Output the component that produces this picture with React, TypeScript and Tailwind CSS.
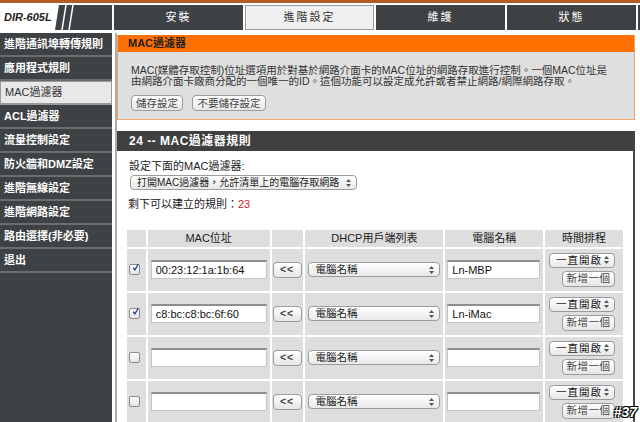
import React from 'react';

const font = 'font-["Liberation_Sans","Noto_Sans_CJK_TC",sans-serif]';

const menu = [
  '進階通訊埠轉傳規則',
  '應用程式規則',
  'MAC過濾器',
  'ACL過濾器',
  '流量控制設定',
  '防火牆和DMZ設定',
  '進階無線設定',
  '進階網路設定',
  '路由選擇(非必要)',
  '退出',
];

const tabs = ['安裝', '進階設定', '維護', '狀態'];

const rows = [
  { on: true, mac: '00:23:12:1a:1b:64', name: 'Ln-MBP' },
  { on: true, mac: 'c8:bc:c8:bc:6f:60', name: 'Ln-iMac' },
  { on: false, mac: '', name: '' },
  { on: false, mac: '', name: '' },
];

const Arrows = () => (
  <svg width="5" height="8" viewBox="0 0 5 8" className="shrink-0">
    <path d="M2.5 0 L5 3 L0 3 Z" fill="#555" />
    <path d="M0 5 L5 5 L2.5 8 Z" fill="#555" />
  </svg>
);

const Select = ({ text, className }: { text: string; className: string }) => (
  <div
    className={`flex h-[15px] items-center justify-between rounded-[4px] border border-[#9c9c9c] bg-gradient-to-b from-white to-[#e8e8e8] pl-[6px] pr-[5px] leading-none text-[#222] ${className}`}
  >
    <span className="whitespace-nowrap">{text}</span>
    <Arrows />
  </div>
);

const Btn = ({ children, className = '' }: { children: React.ReactNode; className?: string }) => (
  <div
    className={`flex h-[16px] items-center justify-center rounded-[4px] border border-[#9c9c9c] bg-gradient-to-b from-white to-[#e6e6e6] text-[10.5px] leading-none text-[#444] ${className}`}
  >
    {children}
  </div>
);

const Input = ({ value, className }: { value: string; className: string }) => (
  <div
    className={`flex h-[19px] items-center border border-[#c4c4c4] border-t-[2px] border-t-[#8e8e8e] bg-white pl-[4px] text-[11px] leading-none text-[#111] ${className}`}
  >
    {value}
  </div>
);

const Check = ({ on }: { on: boolean }) => (
  <div className="ml-[2px] flex h-[11px] w-[11px] items-center justify-center rounded-[2px] border border-[#8a8a8a] bg-gradient-to-b from-white to-[#e4e4e4]">
    {on && (
      <svg width="12" height="13" viewBox="0 0 12 13" className="-mt-[4px] ml-[2px]">
        <path d="M2 7 L5 10.5 L11 0.5" stroke="#1d3f8a" strokeWidth="2.2" fill="none" />
      </svg>
    )}
  </div>
);

export default function App() {
  return (
    <div className={`relative h-[422px] w-[640px] overflow-hidden bg-white ${font}`}>
      <div className="h-[3px] bg-[#b45a27]" />
      <div className="mt-[2px] flex h-[25px] bg-[#3f4244]">
        <div className="flex w-[112px] items-center">
          <div className="flex h-full w-[55px] items-center bg-white pl-[4px] text-[11px] font-bold italic text-[#222]">
            DIR-605L
          </div>
          <svg width="24" height="25" viewBox="0 0 24 25">
            <path d="M0 0 L4 0 L0 25 Z" fill="#fff" />
            <path d="M7 25 L11 0" stroke="#fff" strokeWidth="1.5" />
            <path d="M14 25 L18 0" stroke="#fff" strokeWidth="1.5" />
          </svg>
        </div>
        <div className="flex h-full gap-[2px] border-l-[2px] border-white bg-white pr-[2px]">
          {tabs.map((t, i) => (
            <div
              key={t}
              className={`flex w-[129px] items-center justify-center text-[11px] tracking-[2px] ${
                i === 1
                  ? 'border border-[#9a9a9a] bg-[#f0f0f0] text-[#333]'
                  : 'bg-[#3f4244] text-white'
              }`}
            >
              {t}
            </div>
          ))}
        </div>
        <div className="flex-1" />
      </div>
      <div className="mt-[3px] flex h-[389px]">
        <div className="w-[112px] bg-[#3f4244]">
          {menu.map((m) => (
            <div
              key={m}
              className={`flex h-[24px] items-center border-b-[2px] pl-[4px] text-[11px] ${
                m === 'MAC過濾器'
                  ? 'border border-[#9a9a9a] bg-[#e8e8e8] text-[#333]'
                  : 'border-[#6b6e70] font-bold text-white'
              }`}
            >
              {m}
            </div>
          ))}
        </div>
        <div className="ml-[3px] w-[520px] border-l-[2px] border-[#ababab] pt-[2px]">
          <div className="border border-t-0 border-[#f3a56a]">
            <div className="flex h-[17px] items-center bg-[#ff7000] pl-[10px] text-[11px] font-bold text-[#222]">
              MAC過濾器
            </div>
            <div className="bg-[#dfdfdf] px-[13px] pb-[8px] pt-[13px]">
              <p className="text-[10.5px] leading-[11px] text-[#333]">
                MAC(媒體存取控制)位址選項用於對基於網路介面卡的MAC位址的網路存取進行控制。一個MAC位址是
                <br />
                由網路介面卡廠商分配的一個唯一的ID。這個功能可以設定成允許或者禁止網路/網際網路存取。
              </p>
              <div className="mt-[8px] flex gap-[9px]">
                <Btn className="w-[52px]">儲存設定</Btn>
                <Btn className="w-[74px]">不要儲存設定</Btn>
              </div>
            </div>
          </div>
          <div className="mt-[11px] border-r-[2px] border-[#444]">
            <div className="flex h-[20px] items-center bg-[#404040] pl-[12px] text-[12px] font-bold tracking-[0.5px] text-white">
              24 -- MAC過濾器規則
            </div>
            <div className="bg-white px-[8px] pb-[20px] pt-[9px]">
              <div className="pl-[4px] text-[11px] leading-[13px] text-[#222]">設定下面的MAC過濾器:</div>
              <Select
                text="打開MAC過濾器，允許清單上的電腦存取網路"
                className="ml-[5px] mt-[2px] w-[227px] text-[10px]"
              />
              <div className="mt-[8px] pl-[3px] text-[11px] leading-[13px] text-[#222]">
                剩下可以建立的規則：<span className="text-[#d01818]">23</span>
              </div>
              <table className="mt-[17px] border-separate border-spacing-[2px] text-[11px] text-[#222]">
                <thead>
                  <tr className="h-[16px]">
                    <th className="w-[19px] bg-[#dedede] p-0" />
                    <th className="w-[122px] bg-[#dedede] p-0 font-normal">MAC位址</th>
                    <th className="w-[32px] bg-[#dedede] p-0" />
                    <th className="w-[138px] bg-[#dedede] p-0 font-normal">DHCP用戶端列表</th>
                    <th className="w-[98px] bg-[#dedede] p-0 font-normal">電腦名稱</th>
                    <th className="w-[78px] bg-[#dedede] p-0 font-normal">時間排程</th>
                  </tr>
                </thead>
                <tbody>
                  {rows.map((r, i) => (
                    <tr key={i} className="h-[42px]">
                      <td className="bg-[#dedede] p-0">
                        <Check on={r.on} />
                      </td>
                      <td className="bg-[#dedede] p-0">
                        <Input value={r.mac} className="ml-[3px] w-[116px]" />
                      </td>
                      <td className="bg-[#dedede] p-0">
                        <Btn className="ml-[1px] h-[15px] w-[29px] text-[9px] font-bold tracking-[1px] text-[#333]">
                          &lt;&lt;
                        </Btn>
                      </td>
                      <td className="bg-[#dedede] p-0">
                        <Select text="電腦名稱" className="ml-[3px] w-[132px] text-[10.5px]" />
                      </td>
                      <td className="bg-[#dedede] p-0">
                        <Input value={r.name} className="ml-[2px] w-[93px]" />
                      </td>
                      <td className="bg-[#dedede] p-0">
                        <div className="flex flex-col items-end gap-[3px] pr-[8px]">
                          <Select text="一直開啟" className="w-[66px] text-[10.5px] tracking-[1px]" />
                          <Btn className="w-[53px] tracking-[0.5px]">新增一個</Btn>
                        </div>
                      </td>
                    </tr>
                  ))}
                </tbody>
              </table>
            </div>
          </div>
        </div>
      </div>
      <div className="absolute bottom-[3px] right-[3px] text-[14px] font-bold italic leading-none text-white [text-shadow:1px_1px_0_#000,-1px_-1px_0_#000,1px_-1px_0_#000,-1px_1px_0_#000]">
        #37
      </div>
    </div>
  );
}
